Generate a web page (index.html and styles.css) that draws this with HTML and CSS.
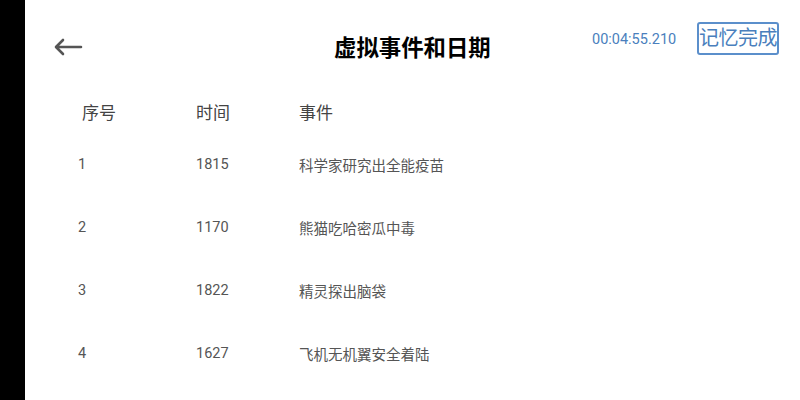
FILE: index.html
```html
<!DOCTYPE html>
<html>
<head>
<meta charset="utf-8">
<link rel="stylesheet" href="styles.css">
</head>
<body>
<div class="screen">
  <div class="side"></div>
  <div class="main">
    <div class="topbar">
      <div class="back">
        <svg width="30" height="18" viewBox="0 0 30 18"><path d="M28 9H4M10 2L3 9L10 16" fill="none" stroke="#555" stroke-width="2.6" stroke-linecap="round" stroke-linejoin="round"/></svg>
      </div>
      <div class="title">虚拟事件和日期</div>
      <div class="timer">00:04:55.210</div>
      <div class="done">记忆完成</div>
    </div>
    <div class="table">
      <div class="row head"><div class="c1">序号</div><div class="c2">时间</div><div class="c3">事件</div></div>
      <div class="row"><div class="c1">1</div><div class="c2">1815</div><div class="c3">科学家研究出全能疫苗</div></div>
      <div class="row"><div class="c1">2</div><div class="c2">1170</div><div class="c3">熊猫吃哈密瓜中毒</div></div>
      <div class="row"><div class="c1">3</div><div class="c2">1822</div><div class="c3">精灵探出脑袋</div></div>
      <div class="row"><div class="c1">4</div><div class="c2">1627</div><div class="c3">飞机无机翼安全着陆</div></div>
    </div>
  </div>
</div>
</body>
</html>
```
FILE: styles.css
```css
html, body { margin: 0; padding: 0; background: #fff; }
body { font-family: Roboto, "Noto Sans CJK SC", sans-serif; width: 800px; height: 400px; overflow: hidden; }
.screen { display: flex; width: 800px; height: 400px; }
.side { width: 25px; background: #000; flex: none; }
.main { flex: 1; display: flex; flex-direction: column; }
.topbar { height: 91px; display: flex; align-items: center; position: relative; }
.back { width: 30px; height: 18px; margin-left: 28px; margin-top: 3px; display: flex; }
.title { position: absolute; left: 309px; top: 33px; font-size: 22.4px; font-weight: bold; color: #000; line-height: 30px; }
.timer { position: absolute; left: 567px; top: 30px; font-size: 14.5px; color: #4a7fbd; line-height: 20px; }
.done { position: absolute; left: 672px; top: 22px; height: 29px; width: 78px; border: 2px solid #5b8fcb; border-radius: 3px; font-size: 20px; line-height: 29px; color: #4a7fbd; text-align: center; letter-spacing: -0.5px; }
.table { display: flex; flex-direction: column; }
.row { display: grid; grid-template-columns: 118px 103px 1fr; height: 63px; align-items: center; padding-left: 53px; font-size: 14.5px; color: #555; }
.row.head { height: 40px; font-size: 17px; color: #444; margin-bottom: 2px; }
.row.head .c1 { padding-left: 4px; }
```
